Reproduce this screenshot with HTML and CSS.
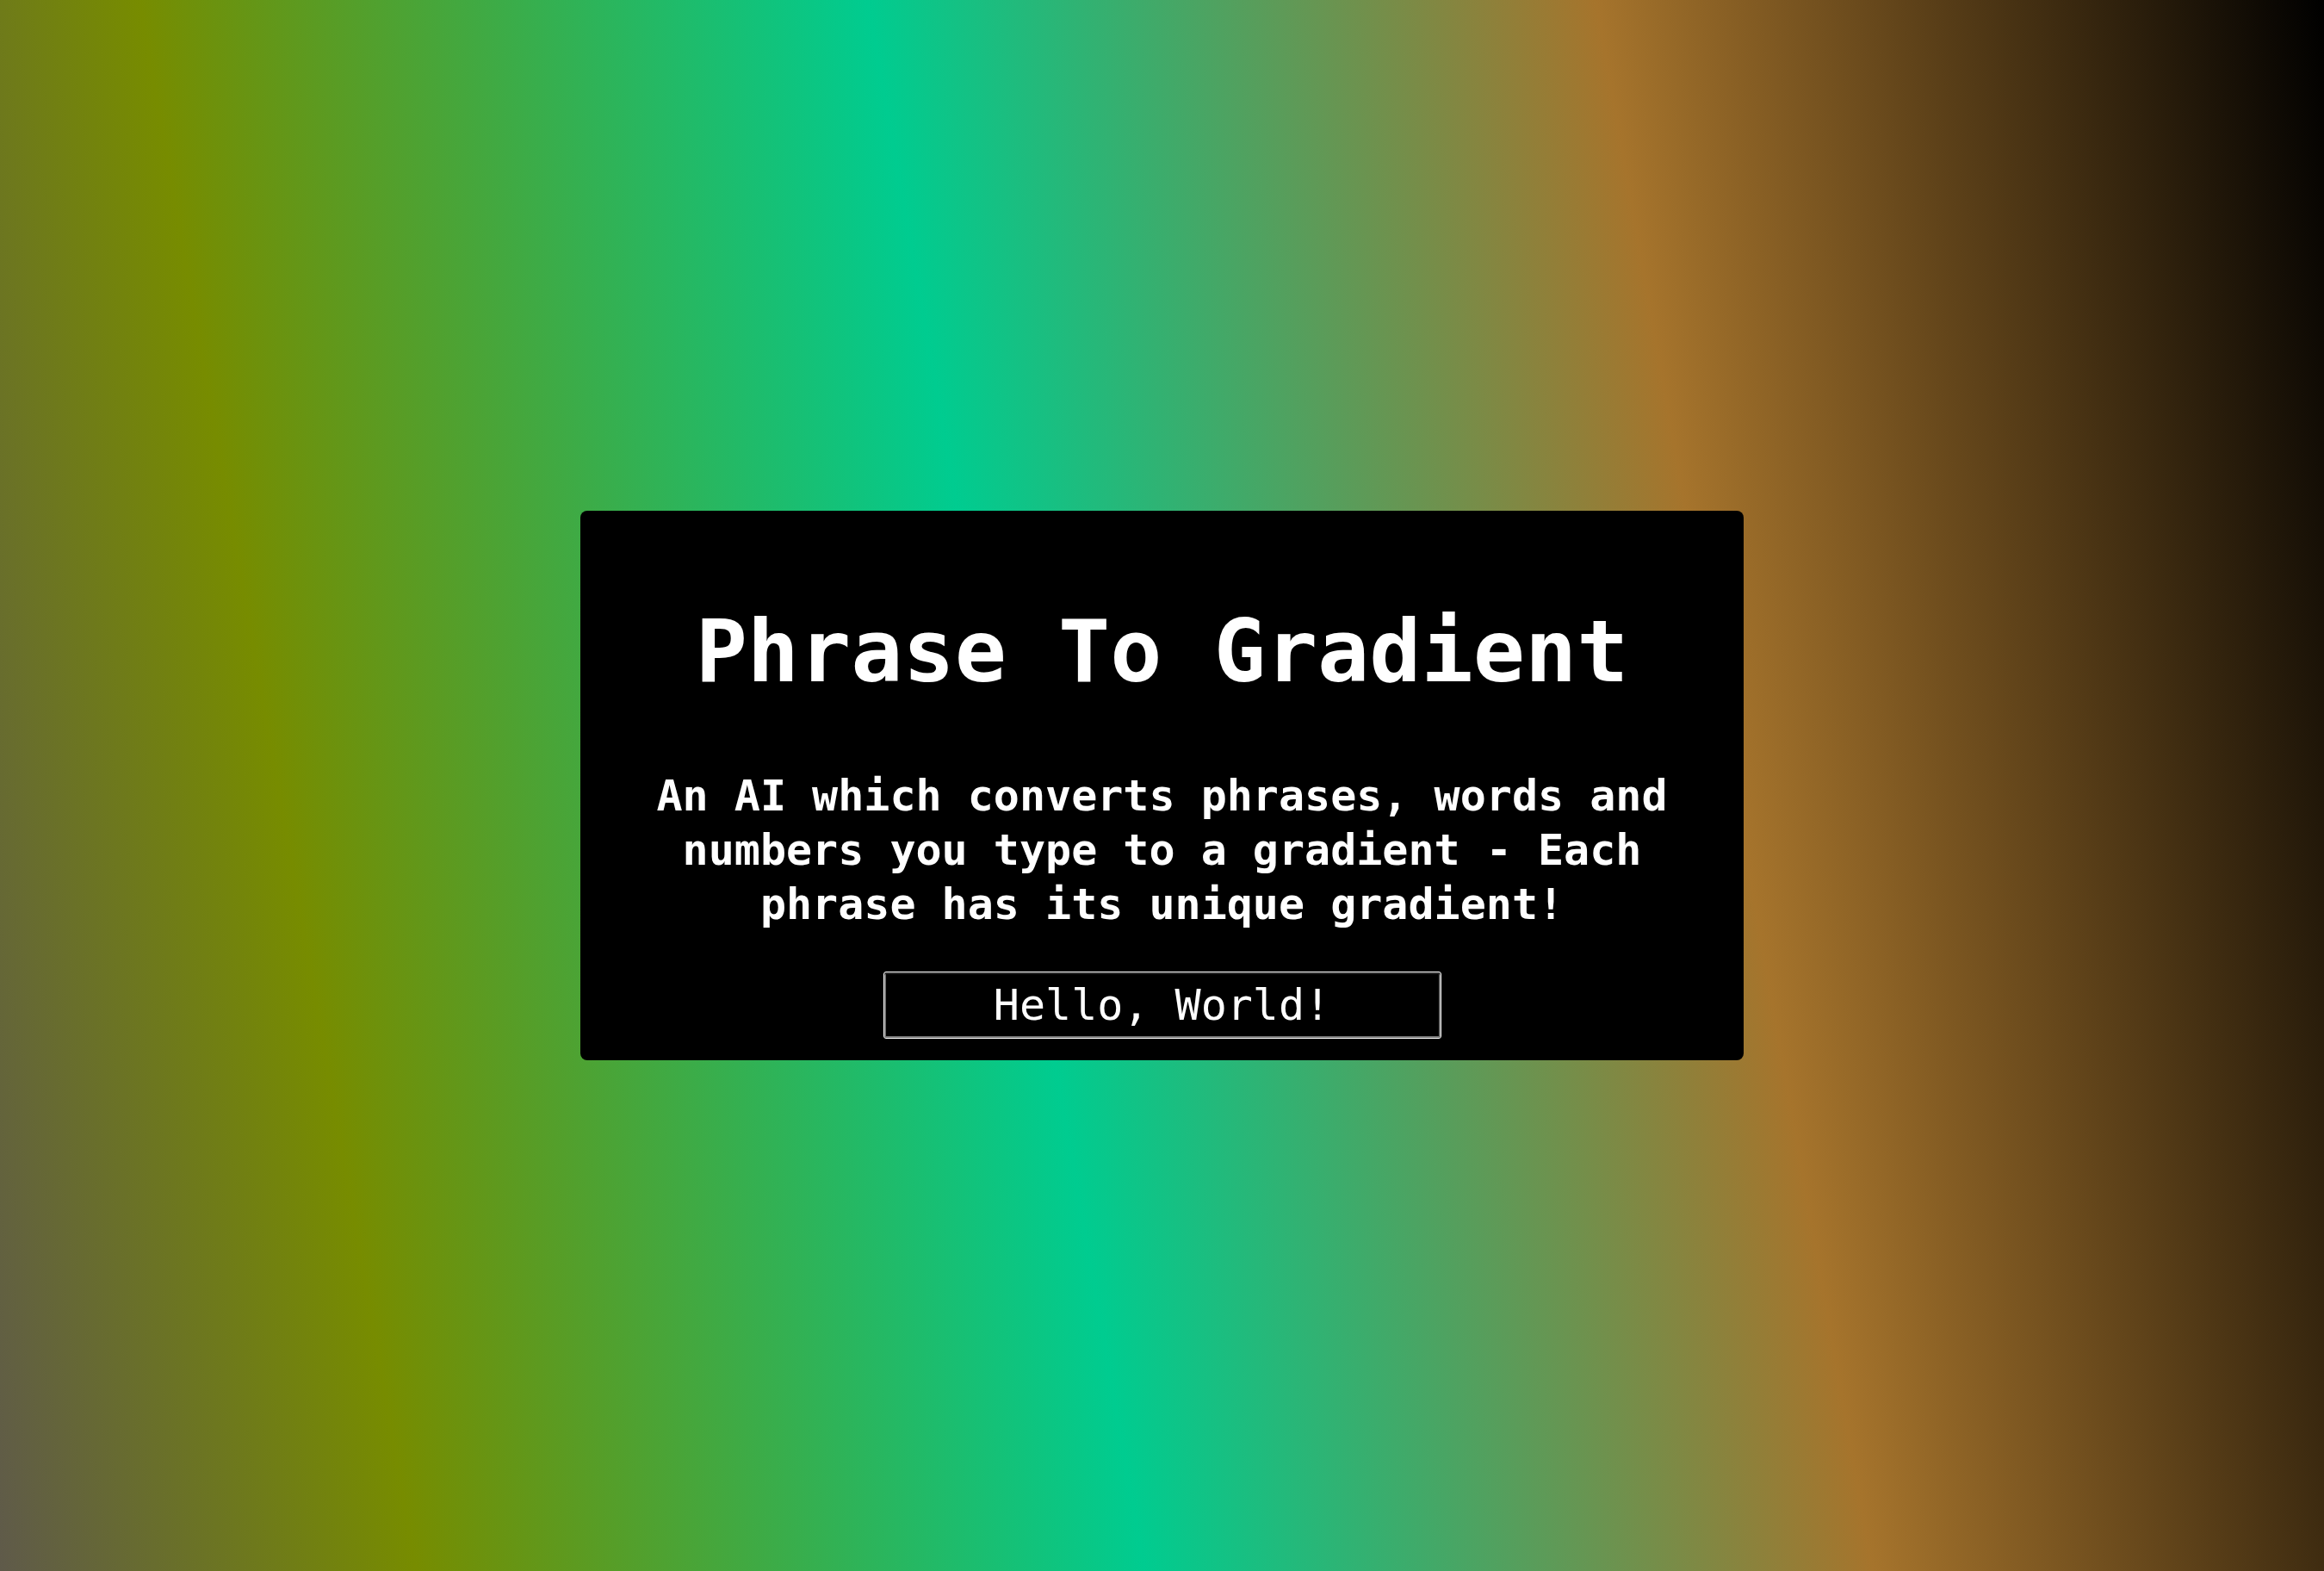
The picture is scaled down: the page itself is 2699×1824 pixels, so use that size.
FILE: index.html
```html
<!DOCTYPE html>
<html lang="en">
<head>
<meta charset="utf-8">
<title>Phrase To Gradient</title>
<link rel="stylesheet" href="styles.css">
</head>
<body>
  <main class="card">
    <h1 class="title">Phrase To Gradient</h1>
    <p class="description">An AI which converts phrases, words and numbers you type to a gradient - Each phrase has its unique gradient!</p>
    <input class="phrase-input" type="text" value="Hello, World!">
  </main>
</body>
</html>
```

FILE: styles.css
```css
html {
  height: 100%;
}

body {
  margin: 0;
  min-height: 100vh;
  display: flex;
  align-items: center;
  justify-content: center;
  font-family: "DejaVu Sans Mono", monospace;
  color: #fff;
  background: linear-gradient(80deg, #5f5a4a 0%, #778c00 16%, #00cc90 44%, #a6742c 72%, #000 100%);
}

.card {
  box-sizing: border-box;
  width: 1351px;
  height: 638px;
  padding: 105px 50px 25px;
  background: #000;
  border-radius: 8px;
  display: flex;
  flex-direction: column;
  align-items: center;
}

.title {
  margin: 0;
  font-size: 100px;
  line-height: 118px;
  font-weight: bold;
  text-align: center;
}

.description {
  margin: 77px 0 0;
  font-size: 50px;
  line-height: 63px;
  font-weight: bold;
  text-align: center;
}

.phrase-input {
  box-sizing: border-box;
  width: 648px;
  height: 78px;
  margin-top: 46px;
  padding: 0;
  background: #000;
  color: #fff;
  font-family: "DejaVu Sans Mono", monospace;
  font-size: 50px;
  text-align: center;
  border: 1px solid #fff;
  border-radius: 3px;
  box-shadow: inset 0 2px 0 #2c2c2c, inset 0 0 0 2px #777;
  outline: none;
}
```
